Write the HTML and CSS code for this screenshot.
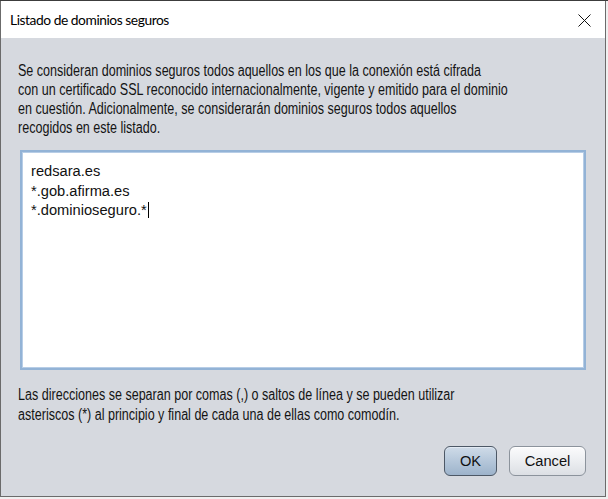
FILE: index.html
```html
<!DOCTYPE html>
<html lang="es">
<head>
<meta charset="utf-8">
<title>Listado de dominios seguros</title>
<link rel="stylesheet" href="styles.css">
</head>
<body>
<div class="dialog">
  <div class="titlebar">
    <span class="title">Listado de dominios seguros</span>
    <span class="close" aria-label="Cerrar">
      <svg width="13" height="13" viewBox="0 0 13 13"><path d="M0.5 0.5 L12.5 12.5 M12.5 0.5 L0.5 12.5" stroke="#111" stroke-width="1" fill="none"/></svg>
    </span>
  </div>
  <div class="content">
    <p class="intro narrow">Se consideran dominios seguros todos aquellos en los que la conexión está cifrada<br>con un certificado SSL reconocido internacionalmente, vigente y emitido para el dominio<br>en cuestión. Adicionalmente, se considerarán dominios seguros todos aquellos<br>recogidos en este listado.</p>
    <div class="textbox">
      <div class="line">redsara.es</div>
      <div class="line">*.gob.afirma.es</div>
      <div class="line">*.dominioseguro.*<span class="caret"></span></div>
    </div>
    <p class="note narrow">Las direcciones se separan por comas (,) o saltos de línea y se pueden utilizar<br>asteriscos (*) al principio y final de cada una de ellas como comodín.</p>
    <div class="buttons">
      <button class="btn btn-default">OK</button>
      <button class="btn">Cancel</button>
    </div>
  </div>
</div>
</body>
</html>
```
FILE: styles.css
```css
html, body {
  margin: 0;
  padding: 0;
}
body {
  background: #f0f0f0;
  border-top: 1px solid #3c3c3c;
  width: 608px;
  height: 498px;
  overflow: hidden;
}
.dialog {
  width: 604px;
  height: 495px;
  border: 1px solid #6b6b6b;
  border-top: none;
  background: #d6d9df;
  display: flex;
  flex-direction: column;
  font-family: "Liberation Sans", Arial, sans-serif;
  color: #111;
}
.titlebar {
  flex-shrink: 0;
  height: 37px;
  background: #ffffff;
  display: flex;
  align-items: center;
  justify-content: space-between;
  padding: 0 14px 0 9px;
}
.title {
  font-family: Lato, "Liberation Sans", sans-serif;
  font-size: 13.8px;
  letter-spacing: -0.45px;
  color: #000;
  margin-top: -1px;
}
.close {
  display: flex;
  margin-top: 1px;
}
.content {
  flex: 1;
  display: flex;
  flex-direction: column;
  padding: 23px 19px 0 17px;
}
.narrow {
  margin: 0;
  font-family: "Liberation Sans", Arial, sans-serif;
  font-size: 16px;
  color: #141414;
  white-space: nowrap;
  transform: scaleX(0.784);
  transform-origin: left center;
}
.intro {
  line-height: 19px;
}
.textbox {
  flex-shrink: 0;
  box-sizing: border-box;
  margin: 13px 0 0 2px;
  height: 220px;
  background: #fff;
  border: 2px solid #93b3d6;
  box-shadow: inset 0 0 0 1px #b7cde6;
  padding: 10px 9px 0 9px;
  font-size: 14.67px;
  line-height: 19.5px;
}
.caret {
  display: inline-block;
  width: 1px;
  height: 16px;
  background: #000;
  vertical-align: -3px;
  margin-left: 1px;
}
.note {
  margin-top: 15px;
  line-height: 20px;
}
.buttons {
  display: flex;
  justify-content: flex-end;
  gap: 12px;
  margin-top: 21px;
}
.btn {
  height: 30px;
  min-width: 77px;
  padding: 0 12px;
  border-radius: 6px;
  border: 1px solid #8c939c;
  background: linear-gradient(#fbfbfc, #eceef1 50%, #dcdfe4);
  font-family: "Liberation Sans", Arial, sans-serif;
  font-size: 14.67px;
  color: #111;
  box-shadow: inset 0 1px 0 #ffffff;
}
.btn-default {
  min-width: 53px;
  border-color: #4d5866;
  background: linear-gradient(#cfdbe8, #b5c7da 50%, #9db3cb);
  box-shadow: inset 0 1px 0 #e2eaf3;
}
```
